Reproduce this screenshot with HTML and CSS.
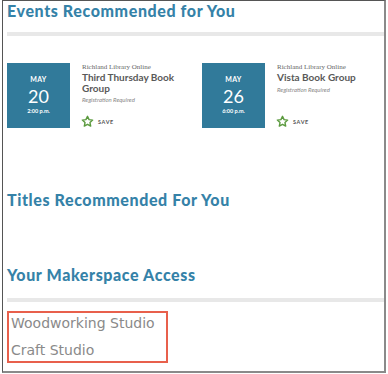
FILE: index.html
```html
<!DOCTYPE html>
<html lang="en">
<head>
  <meta charset="UTF-8">
  <meta name="viewport" content="width=device-width, initial-scale=1.0">
  <title>My Account</title>
  <link rel="stylesheet" href="styles.css">
</head>
<body>

<div class="frame">

  <!-- Events -->
  <h2 class="section-title">Events Recommended for You</h2>
  <div class="rule"></div>

  <div class="event-list">
    <div class="event">
      <div class="date-box">
        <div class="month">MAY</div>
        <div class="day">20</div>
        <div class="time">2:00 p.m.</div>
      </div>
      <div class="event-info">
        <div class="location">Richland Library Online</div>
        <div class="event-title">Third Thursday Book Group</div>
        <div class="reg">Registration Required</div>
        <div class="save">
          <svg class="star" width="13" height="13" viewBox="0 0 24 24">
            <polygon points="12,2.5 14.9,8.6 21.5,9.4 16.6,13.9 17.9,20.5 12,17.2 6.1,20.5 7.4,13.9 2.5,9.4 9.1,8.6" fill="none" stroke="#5b9a3e" stroke-width="2.6" stroke-linejoin="round"/>
          </svg>
          <span>SAVE</span>
        </div>
      </div>
    </div>

    <div class="event">
      <div class="date-box">
        <div class="month">MAY</div>
        <div class="day">26</div>
        <div class="time">6:00 p.m.</div>
      </div>
      <div class="event-info">
        <div class="location">Richland Library Online</div>
        <div class="event-title">Vista Book Group</div>
        <div class="reg">Registration Required</div>
        <div class="save">
          <svg class="star" width="13" height="13" viewBox="0 0 24 24">
            <polygon points="12,2.5 14.9,8.6 21.5,9.4 16.6,13.9 17.9,20.5 12,17.2 6.1,20.5 7.4,13.9 2.5,9.4 9.1,8.6" fill="none" stroke="#5b9a3e" stroke-width="2.6" stroke-linejoin="round"/>
          </svg>
          <span>SAVE</span>
        </div>
      </div>
    </div>
  </div>

  <!-- Titles -->
  <h2 class="section-title titles">Titles Recommended For You</h2>

  <!-- Makerspace -->
  <h2 class="section-title makerspace">Your Makerspace Access</h2>
  <div class="rule rule-low"></div>

  <ul class="access-list">
    <li>Woodworking Studio</li>
    <li>Craft Studio</li>
  </ul>

</div>

</body>
</html>
```

FILE: styles.css
```css
body {
  margin: 0;
  padding: 0;
  background-color: white;
  font-family: Lato, "Open Sans", sans-serif;
}
.frame {
  margin-left: 2px;
  width: 377px;
  height: 370px;
  border-top: 1px solid #555;
  border-left: 1px solid #555;
  border-right: 2px solid #8a8a8a;
  border-bottom: 2px solid #8a8a8a;
  padding-left: 4px;
  box-sizing: content-box;
  overflow: hidden;
}
.section-title {
  margin: 0;
  font-size: 16px;
  line-height: 20px;
  font-weight: 900;
  letter-spacing: 0.6px;
  color: #3582a8;
}
.rule {
  margin-top: 11px;
  height: 4px;
  background-color: #e8e8e8;
}
.event-list {
  display: flex;
  margin-top: 27px;
}
.event {
  display: flex;
  flex-shrink: 0;
  width: 195px;
  gap: 12px;
}
.date-box {
  width: 63px;
  height: 65px;
  flex-shrink: 0;
  background-color: #317a9a;
  color: white;
  text-align: center;
  padding-top: 12px;
  box-sizing: border-box;
}
.month {
  font-size: 7px;
  font-weight: bold;
  line-height: 8px;
  letter-spacing: 0.3px;
}
.day {
  font-size: 18px;
  line-height: 22px;
  margin-top: 2px;
}
.time {
  font-size: 5.5px;
  font-weight: bold;
  line-height: 8px;
}
.event-info {
  display: flex;
  flex-direction: column;
  width: 106px;
  color: #555;
}
.location {
  font-family: "Liberation Serif", serif;
  font-size: 7px;
  line-height: 8px;
  color: #666;
}
.event-title {
  font-size: 10px;
  font-weight: bold;
  line-height: 10.5px;
  margin-top: 1px;
  color: #595959;
}
.reg {
  font-size: 6px;
  font-style: italic;
  line-height: 8px;
  color: #888;
  margin-top: 3px;
}
.save {
  margin-top: auto;
  display: flex;
  align-items: center;
  gap: 4px;
  font-size: 5.5px;
  font-weight: bold;
  letter-spacing: 0.6px;
  color: #555;
  margin-left: -1px;
}
.titles {
  margin-top: 62px;
}
.makerspace {
  margin-top: 55px;
}
.rule-low {
  margin-top: 13px;
}
.access-list {
  list-style: none;
  margin: 9px 0 0 0;
  padding: 0 0 0 2px;
  width: 155px;
  border: 2px solid #e8604c;
  font-family: "DejaVu Sans", sans-serif;
  font-size: 14px;
  line-height: 21px;
  color: #8a8a8a;
}
.access-list li + li {
  margin-top: 6px;
}
```
